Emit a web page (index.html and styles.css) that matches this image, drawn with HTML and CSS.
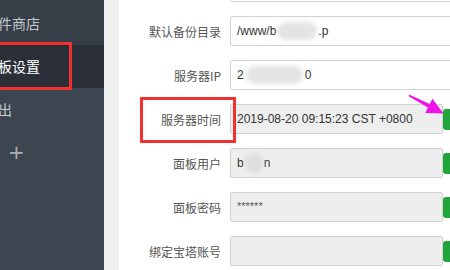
FILE: index.html
```html
<!DOCTYPE html>
<html>
<head>
<meta charset="utf-8">
<link rel="stylesheet" href="styles.css">
</head>
<body>
<div class="app">
  <aside class="sidebar">
    <div class="menu-item first">软件商店</div>
    <div class="menu-item active">面板设置</div>
    <div class="menu-item">退出</div>
    <div class="menu-item plus">+</div>
  </aside>
  <div class="gutter"></div>
  <main class="content">
    <div class="form">
      <div class="row"><label class="lbl">面板端口</label><div class="inp">8888</div></div>
      <div class="row"><label class="lbl">默认备份目录</label><div class="inp">/www/b<span class="blur b1"></span>.p</div></div>
      <div class="row"><label class="lbl">服务器IP</label><div class="inp">2<span class="blur b2"></span>0</div></div>
      <div class="row"><label class="lbl">服务器时间</label><div class="inp dis short">2019-08-20 09:15:23 CST +0800</div><span class="btn"></span></div>
      <div class="row"><label class="lbl">面板用户</label><div class="inp dis short">b<span class="blur b3"></span>n</div><span class="btn"></span></div>
      <div class="row"><label class="lbl">面板密码</label><div class="inp dis short pwd">******</div><span class="btn"></span></div>
      <div class="row"><label class="lbl">绑定宝塔账号</label><div class="inp dis short"></div><span class="btn"></span></div>
    </div>
  </main>
</div>
<div class="mark mark-left"></div>
<div class="mark mark-right"></div>
<svg class="arrow" width="50" height="34" viewBox="0 0 50 34">
  <polygon points="4,4.5 24.7,14 27.4,8.7 38.5,23.5 20.2,22.9 22.9,17.6 4,6.5" fill="#f012e8"/>
</svg>
</body>
</html>
```

FILE: styles.css
```css
html, body {
  margin: 0;
  padding: 0;
  width: 450px;
  height: 270px;
  overflow: hidden;
  background: #fff;
  font-family: "Liberation Sans", "Noto Sans CJK SC", sans-serif;
}
.app {
  display: flex;
  height: 270px;
}
.sidebar {
  width: 104px;
  flex: none;
  background: #3d4650;
  display: flex;
  flex-direction: column;
  overflow: hidden;
}
.menu-item {
  height: 43px;
  line-height: 43px;
  font-size: 14px;
  color: #c4c8cc;
  text-indent: -16px;
  white-space: nowrap;
  font-family: "Noto Sans CJK SC", sans-serif;
}
.sidebar .first {
  background: #363e47;
  height: 45px;
  line-height: 47px;
}
.sidebar .active {
  background: #2b3038;
  color: #fff;
}
.sidebar .plus {
  text-indent: 8px;
  font-size: 20px;
  color: #a9afb5;
  font-family: "DejaVu Sans", sans-serif;
  line-height: 42px;
}
.gutter {
  width: 15px;
  flex: none;
  background: #f0f0f0;
}
.content {
  flex: 1;
  background: #fff;
  overflow: hidden;
}
.form {
  margin-top: -28px;
  display: flex;
  flex-direction: column;
  gap: 14px;
}
.row {
  display: flex;
  align-items: center;
  height: 30px;
}
.lbl {
  width: 102px;
  flex: none;
  text-align: right;
  font-size: 12px;
  color: #555;
  margin-right: 9px;
  font-family: "Noto Sans CJK SC", sans-serif;
}
.inp {
  flex: none;
  box-sizing: border-box;
  width: 240px;
  height: 30px;
  border: 1px solid #d2d2d2;
  border-radius: 2px;
  background: #fff;
  font-size: 12px;
  color: #333;
  line-height: 28px;
  padding-left: 6px;
  white-space: nowrap;
  overflow: hidden;
  display: flex;
  align-items: center;
}
.inp.dis {
  background: #eeeeee;
}
.inp.short {
  width: 213px;
}
.inp.pwd {
  font-size: 11px;
  color: #555;
  padding-bottom: 3px;
}
.blur {
  display: inline-block;
  height: 18px;
  background: #e4e4e4;
  border-radius: 9px;
  filter: blur(2px);
}
.b1 { width: 40px; margin: 0 1px; }
.b2 { width: 57px; margin: 0 2px; }
.b3 { width: 18px; height: 20px; border-radius: 10px; background: #dedede; margin: 0 1px; }
.btn {
  flex: none;
  width: 24px;
  height: 21px;
  border-radius: 3px;
  background: #20a53a;
}
.mark {
  position: absolute;
  box-sizing: border-box;
  border: 3px solid #f23030;
}
.mark-left {
  left: -10px;
  top: 42px;
  width: 82px;
  height: 48px;
}
.mark-right {
  left: 140px;
  top: 97px;
  width: 96px;
  height: 46px;
}
.arrow {
  position: absolute;
  left: 405px;
  top: 90px;
}
```
